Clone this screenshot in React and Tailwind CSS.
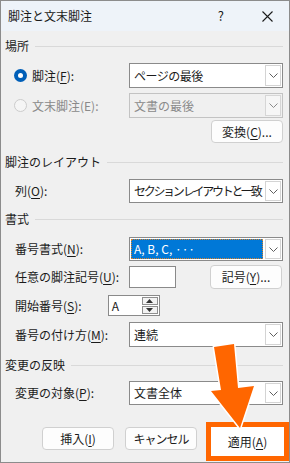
import React from 'react'

const font = "font-['Noto_Sans_CJK_JP','Noto_Sans',sans-serif]"

function U({ children }) {
  return <span className="underline underline-offset-2">{children}</span>
}

function Chevron({ color = '#5f5f5f' }) {
  return (
    <svg width="9" height="5" viewBox="0 0 9 5">
      <path d="M0.5 0.5 L4.5 4.5 L8.5 0.5" fill="none" stroke={color} strokeWidth="1" />
    </svg>
  )
}

function Select({ children, disabled, sizeClass = 'h-[25px]' }) {
  return (
    <div
      className={
        disabled
          ? `ml-auto flex w-[154px] shrink-0 ${sizeClass} border border-[#c3c3c3] bg-[#f0f0f0]`
          : `ml-auto flex w-[154px] shrink-0 ${sizeClass} border border-[#8a8a8a] bg-white`
      }
    >
      <div className="flex min-w-0 flex-1 items-center overflow-hidden p-[1px]">{children}</div>
      <div
        className={
          disabled
            ? 'm-[1px] flex w-[16px] shrink-0 items-center justify-center border border-[#d6d6d6] bg-[#f6f6f6]'
            : 'm-[1px] flex w-[16px] shrink-0 items-center justify-center border border-[#d4d4d4] bg-white'
        }
      >
        <Chevron color={disabled ? '#8a8a8a' : '#5f5f5f'} />
      </div>
    </div>
  )
}

function Heading({ children, className }) {
  return (
    <div className={`flex h-[16px] items-center pl-[4px] pr-[6px] ${className}`}>
      <span className="text-[12px] leading-none text-[#1b1b1b]">{children}</span>
      <div className="ml-[6px] h-px flex-1 bg-[#d9d9d9]" />
    </div>
  )
}

function Btn({ children, className = '' }) {
  return (
    <div
      className={`flex h-[23px] w-[72px] items-center justify-center rounded-[4px] border border-[#d0d0d0] bg-[#fdfdfd] text-[12px] text-[#1b1b1b] ${className}`}
    >
      {children}
    </div>
  )
}

export default function App() {
  return (
    <div className={`relative h-[463px] w-[290px] overflow-hidden border border-[#8c8c8c] bg-[#f0f0f0] ${font}`}>
      {/* title bar */}
      <div className="flex h-[30px] items-center bg-[#eef3f9] pl-[7px] text-[12px] text-[#1b1b1b]">
        <span>脚注と文末脚注</span>
        <span className="ml-auto mr-[38px] text-[13px]">?</span>
        <svg className="mr-[16px]" width="11" height="11" viewBox="0 0 11 11">
          <path d="M0.5 0.5 L10.5 10.5 M10.5 0.5 L0.5 10.5" stroke="#1b1b1b" strokeWidth="1.1" />
        </svg>
      </div>

      <Heading className="mt-[7px]">場所</Heading>

      <div className="mt-[9px] flex items-center pl-[13px] pr-[6px] text-[12px] text-[#1b1b1b]">
        <div className="flex h-[13px] w-[13px] items-center justify-center rounded-full bg-[#005fb8]">
          <div className="h-[5px] w-[5px] rounded-full bg-white" />
        </div>
        <span className="ml-[5px]">
          脚注(<U>F</U>):
        </span>
        <Select>
          <span className="pl-[3px] text-[12px] tracking-[-0.5px] text-[#1b1b1b]">ページの最後</span>
        </Select>
      </div>

      <div className="mt-[5px] flex items-center pl-[13px] pr-[6px] text-[12px] text-[#8a8a8a]">
        <div className="h-[13px] w-[13px] rounded-full border border-[#cccccc] bg-[#f5f5f5]" />
        <span className="ml-[5px]">文末脚注(E):</span>
        <Select disabled>
          <span className="pl-[3px] text-[12px] text-[#8a8a8a]">文書の最後</span>
        </Select>
      </div>

      <div className="mt-[2px] flex justify-end pr-[6px]">
        <Btn>
          変換(<U>C</U>)...
        </Btn>
      </div>

      <Heading className="mt-[11px]">脚注のレイアウト</Heading>

      <div className="mt-[9px] flex items-center pl-[14px] pr-[6px] text-[12px] text-[#1b1b1b]">
        <span>
          列(<U>O</U>):
        </span>
        <Select sizeClass="h-[24px]">
          <span className="whitespace-pre pl-[3px] text-[12px] tracking-[-2.3px] text-[#1b1b1b]">
            セクション レイアウトと一致
          </span>
        </Select>
      </div>

      <Heading className="mt-[8px]">書式</Heading>

      <div className="mt-[10px] flex items-center pl-[14px] pr-[6px] text-[12px] text-[#1b1b1b]">
        <span>
          番号書式(<U>N</U>):
        </span>
        <Select sizeClass="h-[24px]">
          <div className="flex h-full flex-1 items-center border border-dotted border-[#d9822b] bg-[#0078d7] pl-[2px] text-[12px] text-white">
            A, B, C, ···
          </div>
        </Select>
      </div>

      <div className="mt-[4px] flex h-[24px] items-center pl-[14px] pr-[7px] text-[12px] text-[#1b1b1b]">
        <span>
          任意の脚注記号(<U>U</U>):
        </span>
        <div className="ml-auto h-[22px] w-[47px] border border-[#8a8a8a] bg-white" />
        <Btn className="ml-[34px] h-[24px]">
          記号(<U>Y</U>)...
        </Btn>
      </div>

      <div className="mt-[6px] flex items-center pl-[14px] pr-[6px] text-[12px] text-[#1b1b1b]">
        <span>
          開始番号(<U>S</U>):
        </span>
        <div className="ml-[26px] flex h-[21px] w-[52px] border border-[#8a8a8a] bg-white">
          <span className="flex flex-1 items-center pl-[3px]">A</span>
          <div className="my-[1px] mr-[1px] flex w-[16px] flex-col gap-[1px]">
            <div className="flex flex-1 items-center justify-center border border-[#8f8f8f] bg-[#f3f3f3]">
              <svg width="7" height="4" viewBox="0 0 7 4">
                <path d="M0 4 L3.5 0 L7 4 Z" fill="#333" />
              </svg>
            </div>
            <div className="flex flex-1 items-center justify-center border border-[#8f8f8f] bg-[#f3f3f3]">
              <svg width="7" height="4" viewBox="0 0 7 4">
                <path d="M0 0 L3.5 4 L7 0 Z" fill="#333" />
              </svg>
            </div>
          </div>
        </div>
      </div>

      <div className="mt-[6px] flex items-center pl-[14px] pr-[6px] text-[12px] text-[#1b1b1b]">
        <span>
          番号の付け方(<U>M</U>):
        </span>
        <Select>
          <span className="pl-[3px] text-[12px] text-[#1b1b1b]">連続</span>
        </Select>
      </div>

      <Heading className="mt-[10px]">変更の反映</Heading>

      <div className="mt-[8px] flex items-center pl-[14px] pr-[6px] text-[12px] text-[#1b1b1b]">
        <span>
          変更の対象(<U>P</U>):
        </span>
        <Select sizeClass="h-[24px]">
          <span className="pl-[3px] text-[12px] text-[#1b1b1b]">文書全体</span>
        </Select>
      </div>

      <div className="mt-[17px] flex items-start pl-[41px]">
        <Btn className="mt-[5px] h-[21px] border-[#0067c0]">
          挿入(<U>I</U>)
        </Btn>
        <Btn className="ml-[11px] mt-[5px] h-[21px] tracking-[-1px]">キャンセル</Btn>
        <div className="ml-[9px] flex h-[39px] w-[83px] items-center justify-center border-[5px] border-[#ff6600] bg-white text-[12px] text-[#1b1b1b]">
          適用(<U>A</U>)
        </div>
      </div>

      {/* annotation arrow */}
      <svg className="pointer-events-none absolute left-[-1px] top-[-1px]" width="290" height="463" viewBox="0 0 290 463">
        <polygon
          points="214,347 234,344 238,388 254,386 240,428 211,391 221,390"
          fill="#ff6600"
          stroke="#ffffff"
          strokeWidth="3"
          strokeLinejoin="round"
          paintOrder="stroke"
        />
      </svg>
    </div>
  )
}
